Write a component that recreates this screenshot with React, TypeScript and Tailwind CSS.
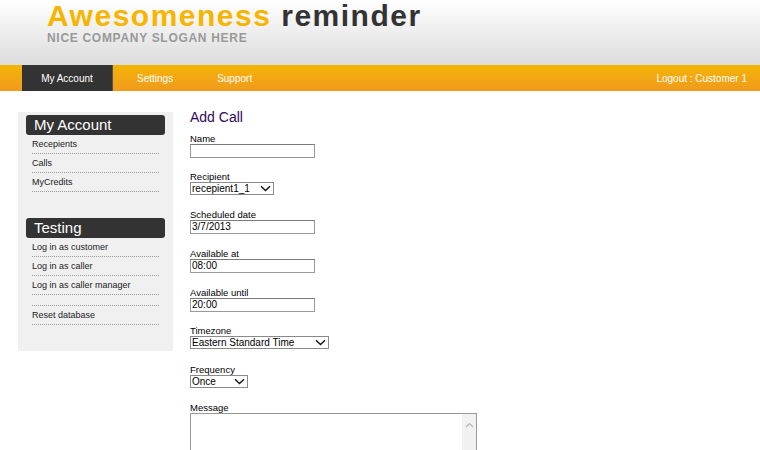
import { ReactNode } from "react"

const font = { fontFamily: '"Liberation Sans", Arial, sans-serif' }

function Chevron() {
  return (
    <svg width="11" height="7" viewBox="0 0 11 7" className="shrink-0">
      <path d="M1 1.2 L5.5 5.5 L10 1.2" fill="none" stroke="#111" strokeWidth="1.4" />
    </svg>
  )
}

function TextBox({ value = "" }: { value?: string }) {
  return (
    <div className="w-[125px] h-[14px] border border-[#999] border-t-[#7a7a7a] bg-white pl-[1px] text-[10px] leading-[12px] text-black">
      {value}
    </div>
  )
}

function SelectBox({ value, w }: { value: string; w: string }) {
  return (
    <div
      className={`${w} h-[13px] border border-[#8a8a8a] bg-white flex items-center justify-between pl-[1px] pr-[2px] text-[10px] leading-[11px] text-black`}
    >
      <span>{value}</span>
      <Chevron />
    </div>
  )
}

function Field({ label, h, children }: { label: string; h: string; children: ReactNode }) {
  return (
    <div className={`flex flex-col ${h}`}>
      <div className="text-[9.5px] leading-[10px] h-[10px] text-black">{label}</div>
      {children}
    </div>
  )
}

function SideBox({ title, items }: { title: string; items: string[] }) {
  return (
    <div className="flex flex-col">
      <div className="h-[20px] bg-[#333] rounded-[3px] text-white text-[15px] leading-[20px] pl-[8px]">
        {title}
      </div>
      <ul className="px-[6px]">
        {items.map((it, i) => (
          <li
            key={i}
            className={`border-b border-dotted border-[#999] text-[9px] text-[#222] ${
              it ? "h-[19px] leading-[18px]" : "h-[11px]"
            }`}
          >
            {it}
          </li>
        ))}
      </ul>
    </div>
  )
}

export default function App() {
  return (
    <div className="w-[760px] h-[450px] overflow-hidden bg-white" style={font}>
      <header className="h-[65px] bg-gradient-to-b from-[#ffffff] to-[#dcdcdc] pl-[47px] pt-[1px]">
        <div className="text-[30px] font-bold leading-[30px] tracking-[1.5px]">
          <span className="text-[#f7b500]">Awesomeness</span>{" "}
          <span className="text-[#333]">reminder</span>
        </div>
        <div className="text-[12px] font-bold text-[#999] leading-[12px] tracking-[0.7px] mt-[1px]">
          NICE COMPANY SLOGAN HERE
        </div>
      </header>
      <nav className="h-[26px] bg-gradient-to-b from-[#f4b400] to-[#f09a1c] flex items-stretch pl-[22px] pr-[13px] text-white text-[10px]">
        <div className="w-[91px] bg-[#333] flex items-center justify-center border-r border-[#555]">
          My Account
        </div>
        <div className="ml-[24px] flex items-center">Settings</div>
        <div className="ml-[44px] flex items-center">Support</div>
        <div className="ml-auto flex items-center">Logout : Customer 1</div>
      </nav>
      <div className="flex pt-[21px]">
        <aside className="ml-[18px] w-[155px] h-[239px] bg-[#f0f0f0] pt-[3px] px-[8px] flex flex-col gap-[26px]">
          <SideBox title="My Account" items={["Recepients", "Calls", "MyCredits"]} />
          <SideBox
            title="Testing"
            items={["Log in as customer", "Log in as caller", "Log in as caller manager", "", "Reset database"]}
          />
        </aside>
        <main className="ml-[17px] flex flex-col">
          <h2 className="text-[14px] leading-[14px] text-[#2e0b5c] mt-[-2px] mb-[10px]">Add Call</h2>
          <Field label="Name" h="h-[38px]">
            <TextBox />
          </Field>
          <Field label="Recipient" h="h-[38px]">
            <SelectBox value="recepient1_1" w="w-[84px]" />
          </Field>
          <Field label="Scheduled date" h="h-[39px]">
            <TextBox value="3/7/2013" />
          </Field>
          <Field label="Available at" h="h-[39px]">
            <TextBox value="08:00" />
          </Field>
          <Field label="Available until" h="h-[38px]">
            <TextBox value="20:00" />
          </Field>
          <Field label="Timezone" h="h-[39px]">
            <SelectBox value="Eastern Standard Time" w="w-[139px]" />
          </Field>
          <Field label="Frequency" h="h-[38px]">
            <SelectBox value="Once" w="w-[58px]" />
          </Field>
          <Field label="Message" h="h-[70px]">
            <div className="w-[287px] h-[60px] border border-[#999] bg-white flex justify-end">
              <div className="w-[14px] bg-[#f1f1f1] flex justify-center pt-[8px]">
                <svg width="9" height="6" viewBox="0 0 9 6">
                  <path d="M1 5 L4.5 1.5 L8 5" fill="none" stroke="#b5b5b5" strokeWidth="1.2" />
                </svg>
              </div>
            </div>
          </Field>
        </main>
      </div>
    </div>
  )
}
